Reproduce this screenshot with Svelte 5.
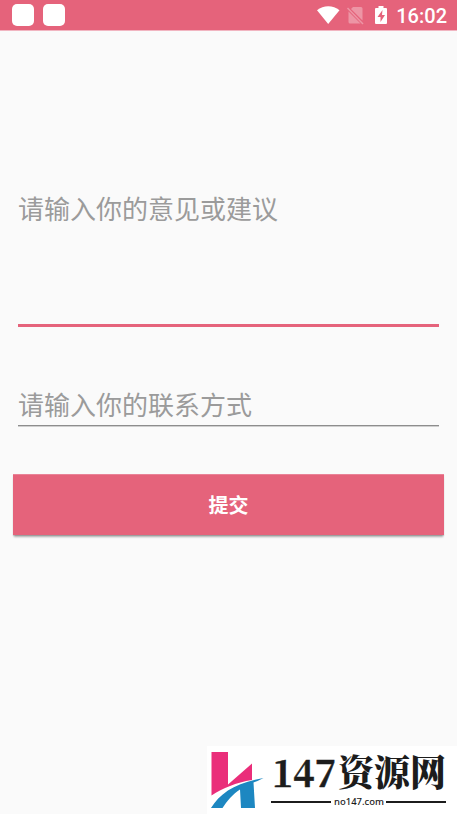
<script>
let suggestion = '';
let contact = '';
let time = '16:02';

function submit() {
  if (!suggestion.trim()) {
    return;
  }
  suggestion = '';
  contact = '';
}
</script>

<style>
  :global(body) {
    background: #fafafa;
  }

  .screen {
    position: relative;
    display: flex;
    flex-direction: column;
    box-sizing: border-box;
    width: 100%;
    height: 814px;
    overflow: hidden;
    background: #fafafa;
    font-family: Roboto, 'Noto Sans CJK SC', sans-serif;
  }

  .status-bar {
    display: flex;
    flex: none;
    align-items: center;
    justify-content: space-between;
    box-sizing: border-box;
    height: 31px;
    padding: 0 10px 0 12px;
    border-bottom: 1px solid #f1b5c1;
    background: #e5637b;
    color: #fff;
  }

  .notifications {
    display: flex;
    gap: 8.5px;
  }

  .notification {
    width: 22px;
    height: 22px;
    border-radius: 5px;
    background: #fff;
  }

  .system {
    display: block;
    width: 76px;
    height: 30px;
  }

  .indicators {
    display: flex;
    align-items: center;
  }

  .time {
    width: 54px;
    font-size: 20px;
    font-weight: 500;
    line-height: 30px;
    text-align: right;
    white-space: nowrap;
    padding-top: 2px;
  }

  .form {
    display: flex;
    flex-direction: column;
    padding: 158px 13px 0;
  }

  .field {
    display: block;
    box-sizing: border-box;
    margin: 0 5px;
    padding: 0;
    border: 0;
    border-radius: 0;
    outline: none;
    background: transparent;
    color: #333;
    font-family: 'Noto Sans CJK SC', sans-serif;
    font-size: 26px;
    line-height: 38px;
    resize: none;
  }

  .field::placeholder {
    color: #9b9b9b;
    opacity: 1;
  }

  .suggestion {
    height: 138px;
    border-bottom: 3px solid #e5637b;
    overflow: hidden;
  }

  .contact {
    height: 42px;
    margin-top: 57px;
    padding-bottom: 3px;
    border-bottom: 1px solid #8d8d8d;
    box-shadow: 0 1px 0 #cfcfcf;
  }

  .submit {
    height: 61px;
    margin-top: 48px;
    padding: 0;
    border: 0;
    border-top: 1px solid #e98397;
    background: #e5637b;
    box-shadow: 0 3px 2px -1px rgba(0, 0, 0, 0.3), 0 1px 1px rgba(0, 0, 0, 0.12);
    color: #fff;
    font-family: 'Noto Sans CJK SC', sans-serif;
    font-size: 20px;
    font-weight: 700;
    line-height: 30px;
  }

  .watermark {
    position: absolute;
    right: 0;
    bottom: 0;
    width: 250px;
    height: 68px;
    background: #fff;
  }

  .watermark svg {
    display: block;
  }

  .digits {
    font-family: 'Noto Serif CJK SC', 'Liberation Serif', serif;
    font-size: 38px;
    font-weight: 700;
    stroke: #1c1c1c;
    stroke-width: 0.6px;
  }

  .brand {
    font-family: 'Noto Serif CJK SC', 'Noto Sans CJK SC', serif;
    font-size: 36px;
    font-weight: 900;
  }

  .domain {
    font-family: 'Noto Sans', sans-serif;
    font-size: 9px;
    font-weight: 500;
  }
</style>

<div class="screen">
  <header class="status-bar">
    <div class="notifications">
      <span class="notification"></span>
      <span class="notification"></span>
    </div>
    <div class="indicators">
      <svg class="system" viewBox="0 0 76 30" fill="#fff">
        <path d="M0 10.300C6.500 4.800 16 4.800 22.500 10.300L11.200 24Z"/>
        <g opacity=".32">
          <path d="M36 7h8q1.500 0 1.500 1.500V20.500L34 9Z"/>
          <path d="M31.500 11.500L43.500 23.500H33q-1.500 0-1.500-1.500Z"/>
          <path d="M30.500 8L46 24" fill="none" stroke="#fff" stroke-width="1.500"/>
        </g>
        <path
          fill-rule="evenodd"
          d="M61.500 6h5v2H69q1 0 1 1V23q0 1-1 1H59q-1 0-1-1V9q0-1 1-1h2.500ZM65.500 10L60.500 17h3v5l4.500-7h-3Z"/>
      </svg>
      <span class="time">{time}</span>
    </div>
  </header>

  <form class="form" on:submit|preventDefault={submit}>
    <textarea
      class="field suggestion"
      placeholder="请输入你的意见或建议"
      bind:value={suggestion}></textarea>
    <input
      class="field contact"
      type="text"
      placeholder="请输入你的联系方式"
      bind:value={contact}/>
    <button class="submit" type="submit">提交</button>
  </form>

  <div class="watermark">
    <svg width="250" height="68" viewBox="0 0 250 68">
      <path d="M4.500 6H21V38.500L45 17.500V34C29 36.500 16 42 4.500 49.500Z" fill="#ea2e7a"/>
      <path d="M4 62C13 47 29 36.500 56.500 32Q50 35.500 46.500 36.500L48 62H34L33 43.500C26 48 20 55 15.500 62Z" fill="#1d87c1"/>
      <g fill="#1c1c1c">
        <text class="digits" x="65" y="40.500" textLength="64" lengthAdjust="spacingAndGlyphs">147</text>
        <text class="brand" x="131" y="40" textLength="108" lengthAdjust="spacingAndGlyphs">资源网</text>
        <rect x="64" y="55" width="60" height="2"/>
        <text class="domain" x="127" y="59" textLength="50" lengthAdjust="spacingAndGlyphs">no147.com</text>
        <rect x="179" y="55" width="60" height="2"/>
      </g>
    </svg>
  </div>
</div>
